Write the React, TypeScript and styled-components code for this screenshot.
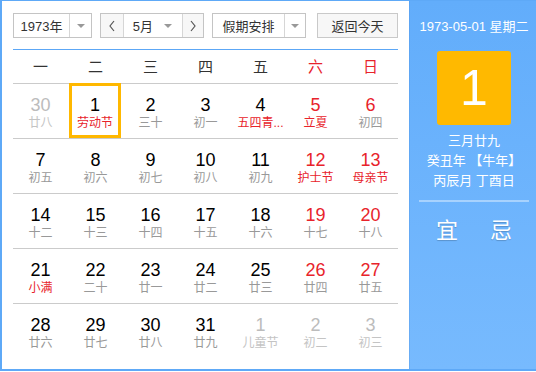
import React from 'react';
import styled, { createGlobalStyle } from 'styled-components';

const Global = createGlobalStyle`
  html, body { margin: 0; padding: 0; background: #fff; }
  body { font-family: "Liberation Sans", Arial, "Noto Sans CJK SC", sans-serif; }
  * { box-sizing: border-box; }
`;

const RED = '#e8232b';

const Frame = styled.div`
  width: 536px;
  height: 371px;
  display: flex;
  border: 2px solid #5ea9f7;
  border-top-width: 1px;
  border-right: none;
`;

const Main = styled.div`
  width: 407px;
  padding: 12px 11px 0 11px;
  display: flex;
  flex-direction: column;
`;

const Toolbar = styled.div`
  display: flex;
  gap: 8px;
  height: 25px;
`;

const Box = styled.div<{ $w: number }>`
  display: flex;
  width: ${p => p.$w}px;
  height: 25px;
  border: 1px solid #c4c4c4;
  background: #fff;
`;

const BoxText = styled.div<{ $w: number; $arrow?: boolean }>`
  width: ${p => p.$w}px;
  display: flex;
  align-items: center;
  justify-content: ${p => (p.$arrow ? 'space-between' : 'center')};
  padding: ${p => (p.$arrow ? '0 10px 0 9px' : '0')};
  font-size: 13px;
  color: #333;
`;

const ArrowPart = styled.div`
  flex: 1;
  border-left: 1px solid #d6d6d6;
  display: flex;
  align-items: center;
  justify-content: center;
`;

const Caret = styled.span`
  width: 0;
  height: 0;
  border-left: 4px solid transparent;
  border-right: 4px solid transparent;
  border-top: 4px solid #999;
`;

const NavBtn = styled.div<{ $side: 'l' | 'r' }>`
  width: ${p => (p.$side === 'l' ? 23 : 21)}px;
  background: #f7f7f7;
  display: flex;
  align-items: center;
  justify-content: center;
  ${p => (p.$side === 'l' ? 'border-right' : 'border-left')}: 1px solid #d6d6d6;
`;

const TodayBtn = styled.div`
  margin-left: auto;
  width: 81px;
  height: 25px;
  border: 1px solid #c9c9c9;
  background: #f7f7f7;
  font-size: 13px;
  color: #333;
  display: flex;
  align-items: center;
  justify-content: center;
`;

const BlueLine = styled.div`
  margin-top: 11px;
  height: 1px;
  background: #5ca7f6;
`;

const Grid7 = styled.div`
  display: grid;
  grid-template-columns: repeat(7, 55px);
`;

const HeadCell = styled.div<{ $red?: boolean }>`
  height: 33px;
  line-height: 33px;
  text-align: center;
  font-size: 15px;
  color: ${p => (p.$red ? RED : '#333')};
`;

const Row = styled(Grid7)`
  border-top: 1px solid #cbcbcb;
  height: 55px;
`;

const Cell = styled.div<{ $selected?: boolean }>`
  display: flex;
  flex-direction: column;
  align-items: center;
  height: ${p => (p.$selected ? 55 : 54)}px;
  padding-top: ${p => (p.$selected ? 9 : 11)}px;
  ${p =>
    p.$selected
      ? `margin: -1px 2px 0 1px; border: 3px solid #ffb800; background: #fff;`
      : ''}
`;

const Num = styled.div<{ $tone: 'normal' | 'red' | 'other' }>`
  font-size: 18px;
  line-height: 20px;
  color: ${p => (p.$tone === 'red' ? RED : p.$tone === 'other' ? '#bcbcbc' : '#000')};
`;

const Lunar = styled.div<{ $tone: 'normal' | 'red' | 'other' }>`
  font-size: 12px;
  line-height: 16px;
  white-space: nowrap;
  color: ${p => (p.$tone === 'red' ? RED : p.$tone === 'other' ? '#c4c4c4' : '#999')};
`;

const Side = styled.div`
  flex: 1;
  background: linear-gradient(#62adfb, #77bafe);
  box-shadow: inset 1px 0 0 rgba(80, 150, 230, 0.35);
  padding-left: 3px;
  display: flex;
  flex-direction: column;
  align-items: center;
  color: #fff;
`;

const SideDate = styled.div`
  margin-top: 16px;
  font-size: 13px;
  line-height: 20px;
  white-space: nowrap;
`;

const DayBox = styled.div`
  margin-top: 14px;
  width: 74px;
  height: 74px;
  border-radius: 3px;
  background: #ffb900;
  display: flex;
  align-items: center;
  justify-content: center;
  font-size: 50px;
  color: #fff;
`;

const SideLines = styled.div`
  margin-top: 6px;
  font-size: 13px;
  line-height: 20px;
  text-align: center;
  white-space: nowrap;
`;

const SideDivider = styled.div`
  margin-top: 9px;
  width: 110px;
  height: 2px;
  background: rgba(255, 255, 255, 0.4);
`;

const YiJi = styled.div`
  margin-top: 16px;
  display: flex;
  gap: 32px;
  font-size: 22px;
  line-height: 26px;
  text-shadow: 0 1px 1px rgba(0, 0, 0, 0.2);
`;

type Tone = 'normal' | 'red' | 'other';
interface Day { n: number; l: string; nt?: Tone; lt?: Tone; sel?: boolean }

const weeks: Day[][] = [
  [
    { n: 30, l: '廿八', nt: 'other', lt: 'other' },
    { n: 1, l: '劳动节', lt: 'red', sel: true },
    { n: 2, l: '三十' },
    { n: 3, l: '初一' },
    { n: 4, l: '五四青...', lt: 'red' },
    { n: 5, l: '立夏', nt: 'red', lt: 'red' },
    { n: 6, l: '初四', nt: 'red' },
  ],
  [
    { n: 7, l: '初五' },
    { n: 8, l: '初六' },
    { n: 9, l: '初七' },
    { n: 10, l: '初八' },
    { n: 11, l: '初九' },
    { n: 12, l: '护士节', nt: 'red', lt: 'red' },
    { n: 13, l: '母亲节', nt: 'red', lt: 'red' },
  ],
  [
    { n: 14, l: '十二' },
    { n: 15, l: '十三' },
    { n: 16, l: '十四' },
    { n: 17, l: '十五' },
    { n: 18, l: '十六' },
    { n: 19, l: '十七', nt: 'red' },
    { n: 20, l: '十八', nt: 'red' },
  ],
  [
    { n: 21, l: '小满', lt: 'red' },
    { n: 22, l: '二十' },
    { n: 23, l: '廿一' },
    { n: 24, l: '廿二' },
    { n: 25, l: '廿三' },
    { n: 26, l: '廿四', nt: 'red' },
    { n: 27, l: '廿五', nt: 'red' },
  ],
  [
    { n: 28, l: '廿六' },
    { n: 29, l: '廿七' },
    { n: 30, l: '廿八' },
    { n: 31, l: '廿九' },
    { n: 1, l: '儿童节', nt: 'other', lt: 'other' },
    { n: 2, l: '初二', nt: 'other', lt: 'other' },
    { n: 3, l: '初三', nt: 'other', lt: 'other' },
  ],
];

const heads = ['一', '二', '三', '四', '五', '六', '日'];

const Chevron = ({ dir }: { dir: 'l' | 'r' }) => (
  <svg width="8" height="12" viewBox="0 0 8 12">
    <polyline
      points={dir === 'l' ? '6,1 2,6 6,11' : '2,1 6,6 2,11'}
      fill="none"
      stroke="#555"
      strokeWidth="1.2"
    />
  </svg>
);

export default function App() {
  return (
    <>
      <Global />
      <Frame>
        <Main>
          <Toolbar>
            <Box $w={79}>
              <BoxText $w={55}>1973年</BoxText>
              <ArrowPart><Caret /></ArrowPart>
            </Box>
            <Box $w={104}>
              <NavBtn $side="l"><Chevron dir="l" /></NavBtn>
              <BoxText $w={59} $arrow>
                <span>5月</span>
                <Caret />
              </BoxText>
              <NavBtn $side="r"><Chevron dir="r" /></NavBtn>
            </Box>
            <Box $w={94}>
              <BoxText $w={71}>假期安排</BoxText>
              <ArrowPart><Caret /></ArrowPart>
            </Box>
            <TodayBtn>返回今天</TodayBtn>
          </Toolbar>
          <BlueLine />
          <Grid7>
            {heads.map((h, i) => (
              <HeadCell key={h} $red={i >= 5}>{h}</HeadCell>
            ))}
          </Grid7>
          {weeks.map((w, wi) => (
            <Row key={wi}>
              {w.map((d, di) => (
                <Cell key={di} $selected={d.sel}>
                  <Num $tone={d.nt ?? 'normal'}>{d.n}</Num>
                  <Lunar $tone={d.lt ?? (d.nt === 'other' ? 'other' : 'normal')}>{d.l}</Lunar>
                </Cell>
              ))}
            </Row>
          ))}
        </Main>
        <Side>
          <SideDate>1973-05-01 星期二</SideDate>
          <DayBox>1</DayBox>
          <SideLines>
            <div>三月廿九</div>
            <div>癸丑年 【牛年】</div>
            <div>丙辰月 丁酉日</div>
          </SideLines>
          <SideDivider />
          <YiJi>
            <span>宜</span>
            <span>忌</span>
          </YiJi>
        </Side>
      </Frame>
    </>
  );
}
